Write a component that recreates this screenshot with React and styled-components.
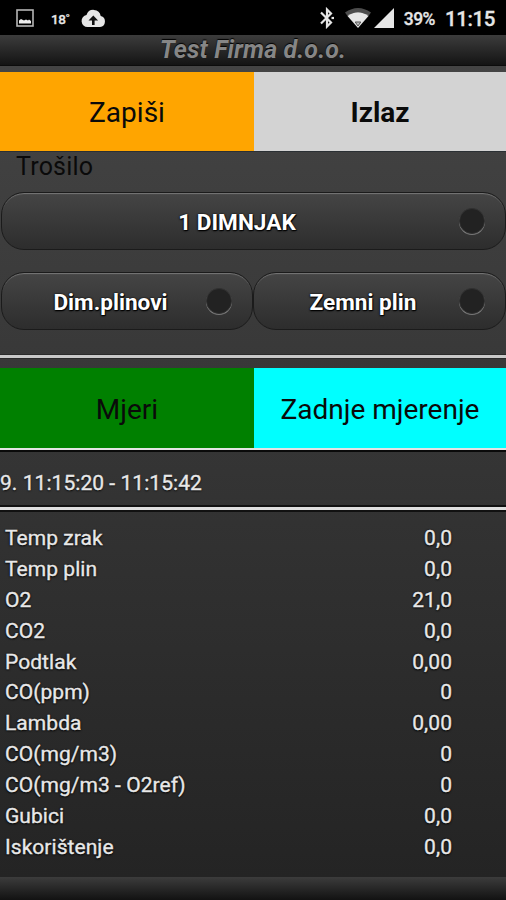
import React from 'react';
import styled, { createGlobalStyle } from 'styled-components';

const GlobalStyle = createGlobalStyle`
  * {
    box-sizing: border-box;
  }

  body {
    margin: 0;
    background: #242424;
    font-family: Roboto, "Liberation Sans", sans-serif;
  }
`;

const StyledScreen = styled.div`
  display: flex;
  flex-direction: column;
  width: 506px;
  height: 900px;
  overflow: hidden;
  background: linear-gradient(#444 66px, #242424 877px);
`;

const StyledStatusBar = styled.div`
  display: flex;
  justify-content: space-between;
  flex: none;
  height: 35px;
  padding: 0 11px 0 16px;
  background: #000;
  color: #e6e6e6;
`;

const StyledStatusGroup = styled.div`
  display: flex;
  align-items: center;
  padding-top: 1px;

  svg {
    display: block;
    flex: none;
  }
`;

const StyledTemperature = styled.span`
  width: 18px;
  margin: 1px 12px 0 17px;
  font-size: 13.5px;
  font-weight: 500;
  letter-spacing: -0.4px;
  white-space: nowrap;
  -webkit-text-stroke: 0.3px #e6e6e6;
`;

const StyledBattery = styled.span`
  margin: 2px 10px 0 10px;
  font-size: 17.5px;
  font-weight: 500;
  letter-spacing: -0.5px;
  -webkit-text-stroke: 0.3px #e6e6e6;
`;

const StyledClock = styled.span`
  margin-top: 2px;
  font-size: 20.5px;
  font-weight: 500;
  letter-spacing: -0.4px;
  -webkit-text-stroke: 0.3px #e6e6e6;
`;

const StyledWifi = styled.svg`
  margin-left: 9px;
`;

const StyledSignal = styled.svg`
  margin-left: 2px;
`;

const StyledTitleBar = styled.header`
  flex: none;
  height: 31px;
  border-bottom: 1px solid #0c0c0c;
  background: linear-gradient(#3c3c3c, #141414);
  color: #868686;
  text-align: center;
  text-shadow: 0 -1px 1px #000;
  font-size: 25px;
  font-style: italic;
  font-weight: 700;
  line-height: 30px;
  letter-spacing: 0.1px;
`;

const StyledActions = styled.div`
  display: flex;
  flex: none;
  height: ${(props) => props.$height};
  margin-top: ${(props) => props.$top};
`;

const StyledActionButton = styled.button`
  width: ${(props) => props.$width};
  padding: 2px 0 0;
  border: none;
  background: ${(props) => props.$color};
  color: #0a0a0a;
  font-family: inherit;
  font-size: 28px;
  font-weight: ${(props) => (props.$bold ? 700 : 400)};
`;

const StyledLabel = styled.div`
  flex: none;
  height: 41px;
  padding-left: 16px;
  border-top: 1px solid #2b3034;
  color: #0a0a0a;
  font-size: 25px;
  line-height: 29px;
  letter-spacing: 0.2px;
`;

const StyledSelects = styled.div`
  display: flex;
  flex: none;
  height: 58px;
  margin-bottom: 22px;
  padding-left: 1px;
`;

const StyledSelect = styled.button`
  display: flex;
  align-items: center;
  flex: ${(props) => props.$flex || '1'};
  min-width: 0;
  padding: 2px 20px 0 17px;
  border: 1px solid #1b1b1b;
  border-radius: 23px;
  background: linear-gradient(#454545, #2d2d2d);
  box-shadow: inset 0 2px 1px -1px #777;
  color: #fff;
  font-family: inherit;
  font-size: 22.6px;
  font-weight: 700;
  text-shadow: 0 1px 2px #000, 0 0 2px #000, 1px 1px 0 #111;
`;

const StyledSelectText = styled.span`
  flex: 1;
  margin: 0 2px 0 -2px;
  text-align: center;
  white-space: nowrap;
`;

const StyledDot = styled.span`
  flex: none;
  width: 26px;
  height: 26px;
  margin-top: -2px;
  border: 1px solid #303030;
  border-radius: 50%;
  background: #222;
  box-shadow: 0 1px 0 #777;
`;

const StyledRule = styled.div`
  flex: none;
  height: 3px;
  background: #dedede;
  box-shadow: 0 0 0 2px #111;
`;

const StyledTopRule = styled.div`
  flex: none;
  height: 2px;
  background: #e4e4e4;
  box-shadow: 0 2px 0 #0a0a0a;
`;

const StyledSoftRule = styled.div`
  flex: none;
  height: 3px;
  margin-top: 3px;
  background: #c8c8c8;
  box-shadow: 0 1px 0 #2a2a2a, 0 -1px 0 #2a2a2a;
`;

const StyledPeriod = styled.div`
  flex: none;
  height: 57px;
  color: #e8e8e8;
  font-size: 21px;
  line-height: 66px;
  letter-spacing: 0.05px;
  text-shadow: 0 1px 2px #000;
  -webkit-text-stroke: 0.35px #e8e8e8;
`;

const StyledReadings = styled.div`
  flex: none;
  height: 367px;
  padding: 13px 54px 0 5px;
`;

const StyledReading = styled.div`
  display: flex;
  justify-content: space-between;
  height: 30.9px;
  color: #e8e8e8;
  font-size: 21px;
  line-height: 30px;
  letter-spacing: 0.05px;
  text-shadow: 0 1px 2px #000, 0 0 2px #111;
  -webkit-text-stroke: 0.35px #e8e8e8;
`;

const StyledFooter = styled.footer`
  flex: 1;
  background: linear-gradient(#3c3c3c, #121212);
`;

const readings = [
  ['Temp zrak', '0,0'],
  ['Temp plin', '0,0'],
  ['O2', '21,0'],
  ['CO2', '0,0'],
  ['Podtlak', '0,00'],
  ['CO(ppm)', '0'],
  ['Lambda', '0,00'],
  ['CO(mg/m3)', '0'],
  ['CO(mg/m3 - O2ref)', '0'],
  ['Gubici', '0,0'],
  ['Iskorištenje', '0,0'],
];

const StatusBar = () => (
  <StyledStatusBar>
    <StyledStatusGroup>
      <svg width="18" height="18" viewBox="0 0 18 18">
        <rect x="1" y="1" width="16" height="16" fill="none" stroke="#b5b5b5" strokeWidth="1.6" />
        <path d="M3 14.500v-3l2-1.500 3 1.500 2-1 2 1 1-1 2 1.500v2.500z" fill="#eee" />
      </svg>
      <StyledTemperature>18˚</StyledTemperature>
      <svg width="25" height="19" viewBox="0 0 25 19">
        <path d="M6.500 18A6 6 0 0 1 5.500 6.100 7.300 7.300 0 0 1 19.700 7 5.600 5.600 0 0 1 19 18z" fill="#e6e6e6" />
        <path d="M12.300 6.500 7.500 11.500h3.500V16h2.600v-4.500h3.500z" fill="#111" />
      </svg>
    </StyledStatusGroup>
    <StyledStatusGroup>
      <svg width="16" height="22" viewBox="0 0 16 22">
        <path d="M2 5.500 12 15.500 8 19.500V2.500l4 4L2 16.500" fill="none" stroke="#e6e6e6" strokeWidth="2.200" />
        <path d="M12.500 11h2.500" stroke="#e6e6e6" strokeWidth="2.200" />
      </svg>
      <StyledWifi width="28" height="22" viewBox="0 0 28 22">
        <path d="M1 5.500Q14-3.500 27 5.500L24.500 9Q14 1.500 3.500 9z" fill="#4c4c4c" />
        <path d="M3.500 9Q14 1.500 24.500 9L14 21z" fill="#e6e6e6" />
        <path d="M11.200 15h5.600L14 19z" fill="#bbb" stroke="#555" strokeWidth="1" />
      </StyledWifi>
      <StyledSignal width="20" height="20" viewBox="0 0 20 20">
        <path d="M20 0v20H0z" fill="#e6e6e6" />
      </StyledSignal>
      <StyledBattery>39%</StyledBattery>
      <StyledClock>11:15</StyledClock>
    </StyledStatusGroup>
  </StyledStatusBar>
);

const Select = ({ children, flex }) => (
  <StyledSelect $flex={flex}>
    <StyledSelectText>{children}</StyledSelectText>
    <StyledDot />
  </StyledSelect>
);

const App = () => {
  return (
    <>
      <GlobalStyle />
      <StyledScreen>
        <StatusBar />
        <StyledTitleBar>Test Firma d.o.o.</StyledTitleBar>

        <StyledActions $height="79px" $top="6px">
          <StyledActionButton $width="254px" $color="#ffa500">Zapiši</StyledActionButton>
          <StyledActionButton $width="252px" $color="#d3d3d3" $bold>Izlaz</StyledActionButton>
        </StyledActions>

        <StyledLabel>Trošilo</StyledLabel>

        <StyledSelects>
          <Select>1 DIMNJAK</Select>
        </StyledSelects>
        <StyledSelects>
          <Select flex="0 0 252px">Dim.plinovi</Select>
          <Select>Zemni plin</Select>
        </StyledSelects>

        <StyledSoftRule />

        <StyledActions $height="80px" $top="10px">
          <StyledActionButton $width="254px" $color="#008000">Mjeri</StyledActionButton>
          <StyledActionButton $width="252px" $color="#00ffff">Zadnje mjerenje</StyledActionButton>
        </StyledActions>

        <StyledTopRule />
        <StyledPeriod>9. 11:15:20 - 11:15:42</StyledPeriod>
        <StyledRule />

        <StyledReadings>
          {readings.map(([name, value]) => (
            <StyledReading key={name}>
              <span>{name}</span>
              <span>{value}</span>
            </StyledReading>
          ))}
        </StyledReadings>
        <StyledFooter />
      </StyledScreen>
    </>
  );
};

export default App;
